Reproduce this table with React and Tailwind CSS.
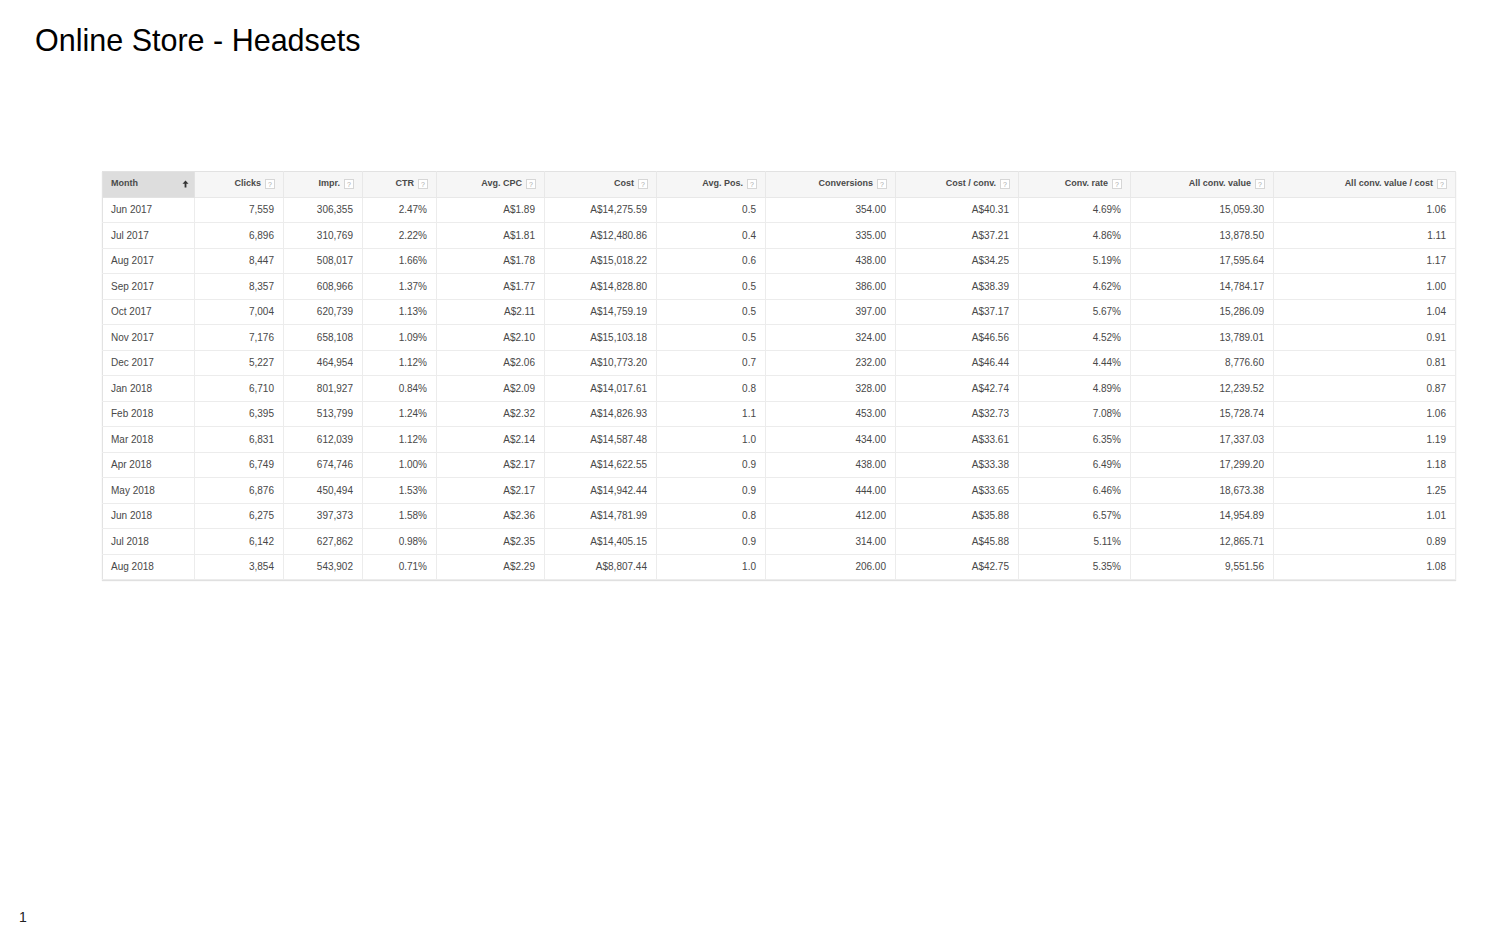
import React from "react";

const cols = [
  { label: "Month", w: "w-[92px]" },
  { label: "Clicks", w: "w-[89px]" },
  { label: "Impr.", w: "w-[79px]" },
  { label: "CTR", w: "w-[74px]" },
  { label: "Avg. CPC", w: "w-[108px]" },
  { label: "Cost", w: "w-[112px]" },
  { label: "Avg. Pos.", w: "w-[109px]" },
  { label: "Conversions", w: "w-[130px]" },
  { label: "Cost / conv.", w: "w-[123px]" },
  { label: "Conv. rate", w: "w-[112px]" },
  { label: "All conv. value", w: "w-[143px]" },
  { label: "All conv. value / cost", w: "w-[182px]" },
];

const rows = [
  ["Jun 2017", "7,559", "306,355", "2.47%", "A$1.89", "A$14,275.59", "0.5", "354.00", "A$40.31", "4.69%", "15,059.30", "1.06"],
  ["Jul 2017", "6,896", "310,769", "2.22%", "A$1.81", "A$12,480.86", "0.4", "335.00", "A$37.21", "4.86%", "13,878.50", "1.11"],
  ["Aug 2017", "8,447", "508,017", "1.66%", "A$1.78", "A$15,018.22", "0.6", "438.00", "A$34.25", "5.19%", "17,595.64", "1.17"],
  ["Sep 2017", "8,357", "608,966", "1.37%", "A$1.77", "A$14,828.80", "0.5", "386.00", "A$38.39", "4.62%", "14,784.17", "1.00"],
  ["Oct 2017", "7,004", "620,739", "1.13%", "A$2.11", "A$14,759.19", "0.5", "397.00", "A$37.17", "5.67%", "15,286.09", "1.04"],
  ["Nov 2017", "7,176", "658,108", "1.09%", "A$2.10", "A$15,103.18", "0.5", "324.00", "A$46.56", "4.52%", "13,789.01", "0.91"],
  ["Dec 2017", "5,227", "464,954", "1.12%", "A$2.06", "A$10,773.20", "0.7", "232.00", "A$46.44", "4.44%", "8,776.60", "0.81"],
  ["Jan 2018", "6,710", "801,927", "0.84%", "A$2.09", "A$14,017.61", "0.8", "328.00", "A$42.74", "4.89%", "12,239.52", "0.87"],
  ["Feb 2018", "6,395", "513,799", "1.24%", "A$2.32", "A$14,826.93", "1.1", "453.00", "A$32.73", "7.08%", "15,728.74", "1.06"],
  ["Mar 2018", "6,831", "612,039", "1.12%", "A$2.14", "A$14,587.48", "1.0", "434.00", "A$33.61", "6.35%", "17,337.03", "1.19"],
  ["Apr 2018", "6,749", "674,746", "1.00%", "A$2.17", "A$14,622.55", "0.9", "438.00", "A$33.38", "6.49%", "17,299.20", "1.18"],
  ["May 2018", "6,876", "450,494", "1.53%", "A$2.17", "A$14,942.44", "0.9", "444.00", "A$33.65", "6.46%", "18,673.38", "1.25"],
  ["Jun 2018", "6,275", "397,373", "1.58%", "A$2.36", "A$14,781.99", "0.8", "412.00", "A$35.88", "6.57%", "14,954.89", "1.01"],
  ["Jul 2018", "6,142", "627,862", "0.98%", "A$2.35", "A$14,405.15", "0.9", "314.00", "A$45.88", "5.11%", "12,865.71", "0.89"],
  ["Aug 2018", "3,854", "543,902", "0.71%", "A$2.29", "A$8,807.44", "1.0", "206.00", "A$42.75", "5.35%", "9,551.56", "1.08"],
];

const Help = () => (
  <span className="ml-[4px] inline-flex h-[10px] w-[10px] items-center justify-center border border-[#d6d6d6] bg-white text-[7px] font-normal leading-none text-[#aaa]">
    ?
  </span>
);

const App = () => {
  return (
    <div className="flex h-screen w-full flex-col bg-white font-['Liberation_Sans',Arial,sans-serif] text-black">
      <h1 className="pl-[35px] pt-[25px] text-[30.5px] font-normal leading-none">
        Online Store - Headsets
      </h1>

      <div className="mt-[115px] pl-[102px]">
        <table className="w-[1353px] table-fixed border-collapse border border-[#e2e2e2] text-[10px] text-[#484848] shadow-[0_1px_1px_rgba(0,0,0,0.12)]">
          <colgroup>
            {cols.map((c) => (
              <col key={c.label} className={c.w} />
            ))}
          </colgroup>
          <thead>
            <tr className="h-[26px]">
              {cols.map((c, i) =>
                i === 0 ? (
                  <th
                    key={c.label}
                    className="border-r border-b border-[#e2e2e2] bg-[#dddddd] pl-[8px] pr-[5px] text-left text-[9px] font-bold text-[#4a4a4a]"
                  >
                    <div className="flex items-center justify-between">
                      <span>{c.label}</span>
                      <svg width="7" height="8" viewBox="0 0 7 8">
                        <path d="M3.5 0.5 L0.5 3.8 H2.6 V7.5 H4.4 V3.8 H6.5 Z" fill="#333" />
                      </svg>
                    </div>
                  </th>
                ) : (
                  <th
                    key={c.label}
                    className="border-r border-b border-[#e8e8e8] bg-[#f6f6f6] pr-[8px] text-right text-[9px] font-bold text-[#4a4a4a]"
                  >
                    <span className="inline-flex items-center">
                      {c.label}
                      <Help />
                    </span>
                  </th>
                )
              )}
            </tr>
          </thead>
          <tbody>
            {rows.map((r) => (
              <tr key={r[0]} className="h-[25.5px]">
                {r.map((v, i) => (
                  <td
                    key={i}
                    className={
                      i === 0
                        ? "border-r border-b border-[#ececec] pl-[8px] text-left"
                        : "border-r border-b border-[#ececec] pr-[9px] text-right"
                    }
                  >
                    {v}
                  </td>
                ))}
              </tr>
            ))}
          </tbody>
        </table>
      </div>

      <div className="mt-auto pb-[14px] pl-[19px] text-[14px] leading-none text-[#222]">1</div>
    </div>
  );
};

export default App;
